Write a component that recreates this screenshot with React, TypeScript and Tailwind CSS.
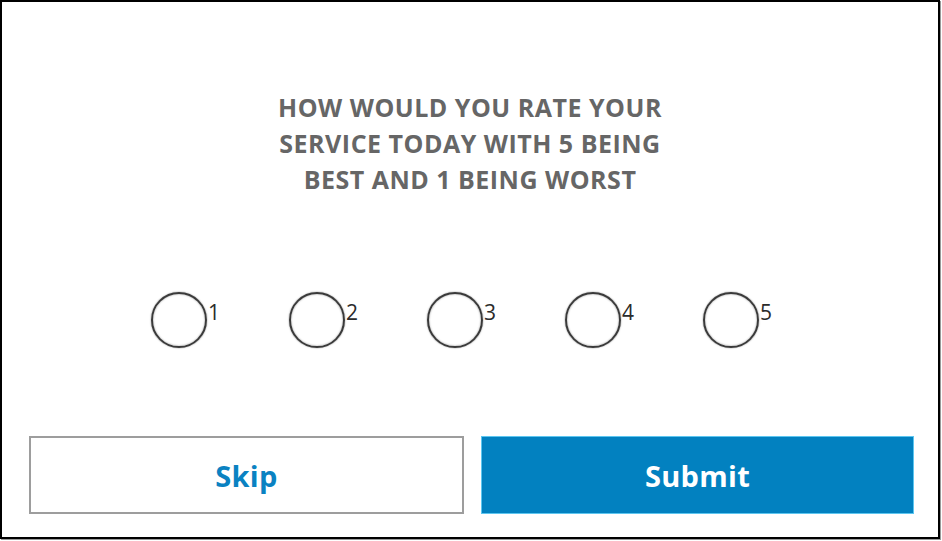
import { useState } from "react";

const ratings = [1, 2, 3, 4, 5];

export default function App() {
    const [rating, setRating] = useState<number | null>(null);

    return (
        <div className="w-[942px] h-[541px] bg-white" style={{ fontFamily: "'Open Sans', sans-serif" }}>
            <div className="w-[940px] h-[539px] border-2 border-black shadow-[1px_1px_0_#9a9a9a] flex flex-col">

                <h1 className="pt-[87px] text-center text-[25px] leading-[36px] font-bold text-[#666666] tracking-[0.5px]">
                    HOW WOULD YOU RATE YOUR<br />
                    SERVICE TODAY WITH 5 BEING<br />
                    BEST AND 1 BEING WORST
                </h1>

                <div className="mt-[95px] pl-[149px] flex">
                    {ratings.map((n) => (
                        <label key={n} className="w-[138px] flex items-start cursor-pointer">
                            <button
                                onClick={() => setRating(n)}
                                className="w-[56px] h-[56px] rounded-full border-2 border-[#3a3a3a] shadow-[0_0_1.5px_#666,inset_0_0_2px_#999] flex items-center justify-center"
                            >
                                {rating === n && <span className="w-[32px] h-[32px] rounded-full bg-[#3c3c3c]" />}
                            </button>
                            <span className="ml-[1px] mt-[6px] text-[21px] leading-[28px] text-[#2b2b2b]">{n}</span>
                        </label>
                    ))}
                </div>

                <div className="mt-auto mb-[23px] pl-[27px] pr-[24px] flex gap-[17px]">
                    <button className="flex-1 h-[78px] border-2 border-[#9d9d9d] bg-white text-[#0a82c2] text-[29px] font-bold tracking-[0.3px] pt-[2px]">
                        Skip
                    </button>
                    <button className="flex-1 h-[78px] border border-[#5cc6f0] bg-[#0281c0] text-white text-[29px] font-bold tracking-[0.3px] pt-[2px]">
                        Submit
                    </button>
                </div>

            </div>
        </div>
    );
}
